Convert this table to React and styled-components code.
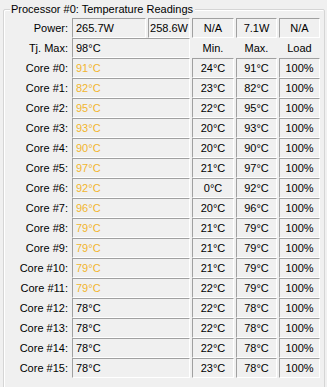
import styled, { createGlobalStyle } from "styled-components";

const GlobalStyle = createGlobalStyle`
  html, body {
    margin: 0;
    padding: 0;
    background: #f0f0f0;
  }
  body {
    font-family: "Liberation Sans", Arial, sans-serif;
    font-size: 11px;
    color: #000;
  }
`;

const Group = styled.div`
  position: relative;
  margin: 9px 2px 0 3px;
  height: 372px;
  border: 1px solid #d5d5d5;
  border-radius: 2px;
  box-shadow: inset 1px 1px 0 #fff;
  padding-top: 8px;
`;

const Title = styled.span`
  position: absolute;
  top: -8px;
  left: 6px;
  padding: 0 2px 0 1px;
  background: #f0f0f0;
  line-height: 15px;
`;

const Grid = styled.div`
  display: grid;
  grid-template-columns: 66px 74px 42px 42px 41px 41px;
  grid-auto-rows: 20px;
  column-gap: 2px;
`;

const Label = styled.div`
  text-align: right;
  padding-right: 2px;
  line-height: 20px;
  white-space: nowrap;
`;

const Box = styled.div`
  box-sizing: border-box;
  height: 20px;
  border-top: 1px solid #a0a0a0;
  border-left: 1px solid #a0a0a0;
  border-bottom: 1px solid #fff;
  border-right: 1px solid #fff;
  line-height: 18px;
  white-space: nowrap;
  overflow: hidden;
  padding-left: ${(p) => (p.$center ? "0" : "3px")};
  text-align: ${(p) => (p.$center ? "center" : "left")};
  grid-column: ${(p) => (p.$span ? `span ${p.$span}` : "auto")};
  color: ${(p) => (p.$hot ? "#f2b52e" : "#000")};
`;

const Heading = styled.div`
  text-align: center;
  line-height: 20px;
`;

const cores = [
  [91, 24, 91],
  [82, 23, 82],
  [95, 22, 95],
  [93, 20, 93],
  [90, 20, 90],
  [97, 21, 97],
  [92, 0, 92],
  [96, 20, 96],
  [79, 21, 79],
  [79, 21, 79],
  [79, 21, 79],
  [79, 22, 79],
  [78, 22, 78],
  [78, 22, 78],
  [78, 22, 78],
  [78, 23, 78],
];

export default function App() {
  return (
    <>
      <GlobalStyle />
      <Group>
        <Title>Processor #0: Temperature Readings</Title>
        <Grid>
          <Label>Power:</Label>
          <Box>265.7W</Box>
          <Box $center>258.6W</Box>
          <Box $center>N/A</Box>
          <Box $center>7.1W</Box>
          <Box $center>N/A</Box>

          <Label>Tj. Max:</Label>
          <Box $span={2}>98°C</Box>
          <Heading>Min.</Heading>
          <Heading>Max.</Heading>
          <Heading>Load</Heading>

          {cores.map(([cur, min, max], i) => (
            <Row key={i} index={i} cur={cur} min={min} max={max} />
          ))}
        </Grid>
      </Group>
    </>
  );
}

function Row({ index, cur, min, max }) {
  return (
    <>
      <Label>Core #{index}:</Label>
      <Box $span={2} $hot={cur >= 79}>
        {cur}°C
      </Box>
      <Box $center>{min}°C</Box>
      <Box $center>{max}°C</Box>
      <Box $center>100%</Box>
    </>
  );
}
